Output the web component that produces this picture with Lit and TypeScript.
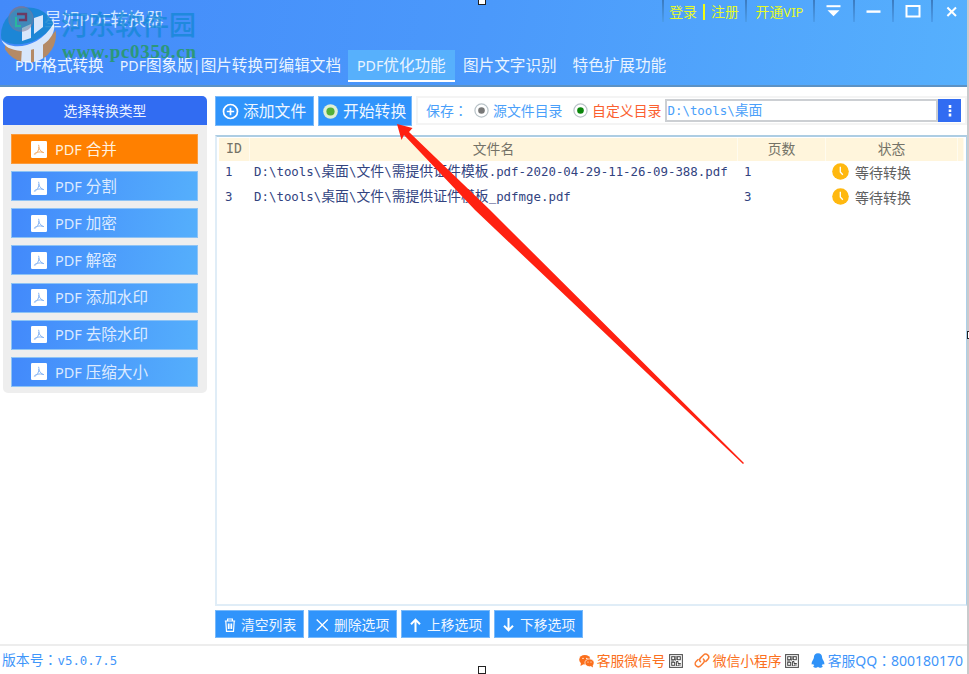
import { LitElement, html, svg, css } from "lit";
import { customElement, state } from "lit/decorators.js";
import { classMap } from "lit/directives/class-map.js";

/** Splits a label into Latin, colon and Chinese runs so each gets its own face and size. */
const runs = (text: string) =>
  (text.match(/[\x00-\x7f]+|：|[^\x00-\x7f：]+/g) ?? []).map((r) =>
    html`<span class=${r === "：" ? "colon" : r.charCodeAt(0) < 128 ? "la" : "zh"}>${r}</span>`);

const icon = (name: string, w: number, h: number, body: unknown) =>
  html`<svg class="icon ${name}" width=${w} height=${h} viewBox="0 0 ${w} ${h}">${body}</svg>`;

const pdfIcon = () => icon("pdf", 16, 17, svg`
  <rect width="16" height="17" rx="1.2" fill="#fff"/>
  <path class="glyph" d="M7.6 3.8C8.2 6 8 7.5 7.4 9C6.5 11.2 5 13.2 3.3 13.2C4.2 11.3 8.3 10.2 12.8 11.6C10.8 11.2 8.5 9.2 7.6 6" fill="none" stroke-width="1"/>`);

const plusIcon = () => icon("plus", 17, 17, svg`
  <g fill="none" stroke="#fff" stroke-width="1.7"><circle cx="8.5" cy="8.5" r="7"/><path d="M4.8 8.5H12.2M8.5 4.8V12.2"/></g>`);
const startIcon = () => icon("start", 15, 15, svg`
  <circle cx="7.5" cy="7.5" r="7.3" fill="#e0efd4"/><circle cx="7.5" cy="7.5" r="4.1" fill="#54b03a"/>`);
const clockIcon = () => icon("clock", 17, 17, svg`
  <circle cx="8.5" cy="8.5" r="8.3" fill="#ffb80f"/><path d="M8.3 3.8V9L10.8 11.8" fill="none" stroke="#fff" stroke-width="1.3"/>`);
const radioIcon = (dot: string) => icon("radio", 15, 15, svg`
  <circle cx="7.5" cy="7.5" r="6.6" fill="#fff" stroke="#b9c3c8" stroke-width="1.2"/><circle cx="7.5" cy="7.5" r="3.3" fill=${dot}/>`);
const qrIcon = () => icon("qr", 14, 14, svg`
  <rect x=".6" y=".6" width="12.8" height="12.8" fill="#fff" stroke="#555" stroke-width="1.1"/>
  <g fill="none" stroke="#444" stroke-width="1"><rect x="2.7" y="2.7" width="3" height="3"/><rect x="8.3" y="2.7" width="3" height="3"/>
  <rect x="2.7" y="8.3" width="3" height="3"/><path d="M7 2V6H5.8M7.4 12V7.5H9V9.5H11.8M9 12V11H11.8M2.2 7H5"/></g>`);

const trash = svg`<g fill="none" stroke="#fff" stroke-width="1.2"><path d="M.8 3H11.2M3.6 3V1H8.4V3M1.8 3.3L2.5 13.3H9.5L10.2 3.3M4.4 5.5V11M6 5.5V11M7.6 5.5V11"/></g>`;
const cross = svg`<path d="M.7 1.5L11.8 12.5M11.8 1.5L.7 12.5" stroke="#fff" stroke-width="1.3"/>`;
const up = svg`<path d="M5.5 14V2M1 6.2L5.5 1.6L10 6.2" fill="none" stroke="#fff" stroke-width="2"/>`;
const down = svg`<path d="M5.5 0V12M1 7.8L5.5 12.4L10 7.8" fill="none" stroke="#fff" stroke-width="2"/>`;

@customElement("app-root")
class AppRoot extends LitElement {
  @state() private tab = 2;
  @state() private kind = 0;

  private tabs = ["PDF格式转换", "PDF图象版|图片转换可编辑文档", "PDF优化功能", "图片文字识别", "特色扩展功能"];
  private kinds = ["合并", "分割", "加密", "解密", "添加水印", "去除水印", "压缩大小"];
  private files = [
    { id: 1, name: "D:\\tools\\桌面\\文件\\需提供证件模板.pdf-2020-04-29-11-26-09-388.pdf", pages: 1 },
    { id: 3, name: "D:\\tools\\桌面\\文件\\需提供证件模板_pdfmge.pdf", pages: 3 },
  ];
  private actions = [
    { label: "清空列表", art: trash, w: 12 },
    { label: "删除选项", art: cross, w: 13 },
    { label: "上移选项", art: up, w: 11 },
    { label: "下移选项", art: down, w: 11 },
  ];

  static styles = css`
    :host { display: block; position: relative; width: 969px; height: 674px; overflow: hidden; background: #fff;
      font-family: "Noto Sans", "Noto Sans CJK SC", sans-serif; font-size: 15.6px; line-height: 1; }
    * { box-sizing: border-box; }
    svg { display: block; flex: none; }
    .la { font-size: .93em; white-space: pre; }
    .zh { font-family: "Noto Sans CJK SC", sans-serif; }
    .colon { font-family: "Noto Sans CJK TC", sans-serif; }
    .mono .la { font-family: "DejaVu Sans Mono", monospace; font-size: 12.42px; }
    .mono { font-size: 13.86px; white-space: nowrap; }
    .window { display: flex; flex-direction: column; width: 967px; height: 674px; }
    .edge { position: absolute; right: 0; top: 0; width: 2px; height: 674px; background: #c9cacc; }

    .header { height: 87px; flex: none; color: #eaf4ff; background: linear-gradient(100deg, #438afa, #4b99fb 50%, #56b0fd);
      border-bottom: 2px solid #5c92c4; display: flex; flex-direction: column; }
    .titlebar { height: 50px; display: flex; align-items: flex-start; }
    .logo { margin: 6px 0 0 8px; }
    .title { margin: 10px auto 0 9px; font-size: 17.8px; color: #d5e9ff; white-space: nowrap; }
    .tool { height: 22px; display: flex; align-items: center; justify-content: center; border-left: 2px solid #3d84d0; color: #e6fa28;
      border-image: linear-gradient(#3a79bd, #4d9fee) 1; font-size: 13.9px; padding-top: 2px; white-space: nowrap; }
    .account { width: 83px; gap: 6px; padding-right: 1px; }
    .account i { width: 2px; height: 16px; background: #f2fc10; }
    .vip { width: 68px; padding-right: 1px; } .vip .la { font-size: 13px; }
    .drop { width: 40px; padding-right: 2px; } .min { width: 39px; } .max { width: 39px; } .close { width: 36px; padding-left: 4px; }

    .tabs { display: flex; padding-left: 6px; height: 32px; white-space: nowrap; }
    .tab { display: flex; align-items: center; padding: 0 8px 0 9px; height: 32px; border-bottom: 2px solid transparent; }
    .tab + .tab { margin-left: -1px; }
    .tab .la { font-size: 14.2px; }
    .tab.on { background: #57b0fc; border-color: #fff; width: 107px; }

    .body { display: flex; flex: 1; }
    .side { width: 204px; height: 297px; margin: 9px 0 0 3px; border-radius: 5px; background: #eee; overflow: hidden; }
    .side-title { height: 29px; background: #316cf2; color: #eaf1ff; font-size: 13.8px; display: flex; align-items: center; justify-content: center; }
    .kinds { display: flex; flex-direction: column; gap: 7.17px; padding: 9px 9px 0 8px; }
    .kind { height: 30px; display: flex; align-items: center; gap: 8px; padding-left: 19px; color: #dceaff; border: 1px solid #8dc3f5;
      background: linear-gradient(100deg, #4289fb, #55affc); white-space: pre; }
    .kind.on { background: #ff8000; border-color: #fb9b3c; color: #fff0dd; }
    .glyph { stroke: #86b5f5; } .kind.on .glyph { stroke: #f5ad68; }

    .main { width: 752px; margin: 9px 0 0 8px; display: flex; flex-direction: column; }
    .toolbar { display: flex; gap: 4px; height: 30px; }
    .btn { display: flex; align-items: center; background: #3094fb; border: 1px solid #78b9fa; color: #eef6ff; white-space: nowrap; }
    .toolbar .btn { gap: 4px; padding-left: 6px; font-size: 15.8px; width: 99px; }
    .toolbar .go { width: 94px; padding-left: 4px; gap: 5px; }
    .save { flex: 1; height: 29px; border: 2px solid #f4f4f4; display: flex; align-items: center; color: #4a9ffa; font-size: 13.9px; padding-left: 8px; white-space: nowrap; }
    .save .radio { margin-right: 4px; }
    .cap { width: 48px; } .own { color: #fb6030; margin-right: 4px; } .src { width: 80px; }
    .path { width: 273px; height: 23px; border: 2px solid #cccfd3; display: flex; align-items: center; }
    .more { width: 23px; height: 23px; background: #316cf2; display: flex; align-items: center; justify-content: center; }

    .table { margin-top: 9px; height: 471px; border: 2px solid #e0edf7; border-top-color: #adcde3; padding: 1px 2px; width: 752px; border-right-width: 1px; border-right-color: #acd0ea; }
    .row { display: grid; grid-template-columns: 31px 488px 88px 132px 6px; height: 25px; align-items: center; color: #32437f; padding-bottom: 2px; }
    .head { height: 22px; color: #747267; font-size: 13.8px; padding: 0; }
    .head > div { height: 23px; background: #fff5dc; border-right: 1px solid #fffbee; display: flex; align-items: center; justify-content: center; padding-bottom: 2px; }
    .row.head .la { font-size: 13.2px; }
    .id { padding-left: 6px; } .name { padding-left: 4px; } .pages { padding-left: 6px; }
    .status { display: flex; align-items: center; gap: 6px; padding-left: 6px; color: #606060; font-size: 14px; }

    .actions { display: flex; gap: 4px; margin-top: 4px; }
    .actions .btn { width: 89px; height: 28px; font-size: 13.8px; gap: 5px; padding: 1px 0 0 7px; }
    .actions .slot { width: 13px; display: flex; justify-content: center; }
    .footer { height: 30px; border-top: 2px solid #ededed; display: flex; align-items: center; color: #3f96fa; padding: 1px 4px 0 2px; font-size: 13.8px; white-space: nowrap; }
    .version { margin-right: auto; }
    .link { display: flex; align-items: center; color: #fb7020; gap: 3px; }
    .wx { margin-right: 11px; } .mini { margin-right: 12px; } .qq { color: #3f96fa; }
    .qq .la { font-size: 14px; }

    .overlay { position: absolute; left: 0; top: 0; pointer-events: none; }
  `;

  private header() {
    return html`<div class="header">
      <div class="titlebar">
        <svg class="logo" width="27" height="27" viewBox="0 0 27 27"><circle cx="13.5" cy="13" r="11.8" fill="#3279ae" stroke="#6674a1" stroke-width="2"/>
          <path d="M9 8H18V14H10V20" fill="none" stroke="#6b3b63" stroke-width="2.6"/><path d="M8 12V21H13" fill="none" stroke="#29b79d" stroke-width="2"/></svg>
        <div class="title">${runs("星如PDF转换器")}</div>
        <div class="tool account"><span class="zh">登录</span><i></i><span class="zh">注册</span></div>
        <div class="tool vip"><span>${runs("开通VIP")}</span></div>
        <div class="tool drop"><svg width="15" height="16" viewBox="0 0 15 16"><path d="M.5 2.2H14.5" stroke="#fff" stroke-width="2"/><path d="M1.5 6.3H13.5L7.5 12.3Z" fill="#fff"/></svg></div>
        <div class="tool min"><svg width="15" height="16"><path d="M.5 7.6H14.5" stroke="#fff" stroke-width="2.4"/></svg></div>
        <div class="tool max"><svg width="16" height="16"><rect x="1.5" y="2" width="13" height="10.5" fill="none" stroke="#fff" stroke-width="2"/></svg></div>
        <div class="tool close"><svg width="12" height="16"><path d="M1.4 3.5L10 12M10 3.5L1.4 12" stroke="#fff" stroke-width="2"/></svg></div>
      </div>
      <div class="tabs">${this.tabs.map((t, i) => html`
        <div class=${classMap({ tab: true, on: i === this.tab })} @click=${() => (this.tab = i)}><span>${runs(t)}</span></div>`)}</div>
    </div>`;
  }

  private sidebar() {
    return html`<div class="side">
      <div class="side-title">${runs("选择转换类型")}</div>
      <div class="kinds">${this.kinds.map((k, i) => html`
        <div class=${classMap({ kind: true, on: i === this.kind })} @click=${() => (this.kind = i)}>${pdfIcon()}<span>${runs("PDF " + k)}</span></div>`)}</div>
    </div>`;
  }

  private panel() {
    return html`<div class="main">
      <div class="toolbar">
        <div class="btn">${plusIcon()}${runs("添加文件")}</div>
        <div class="btn go">${startIcon()}${runs("开始转换")}</div>
        <div class="save">
          <span class="cap">${runs("保存：")}</span>
          ${radioIcon("#777")}<span class="zh src">源文件目录</span>
          ${radioIcon("#0b860b")}<span class="zh own">自定义目录</span>
          <div class="path"><span class="mono">${runs("D:\\tools\\桌面")}</span></div>
          <div class="more"><svg width="4" height="13"><path d="M2 1V4M2 5.5V8M2 9.5V12.5" stroke="#fff" stroke-width="2.6"/></svg></div>
        </div>
      </div>
      <div class="table">
        <div class="row head"><div class="mono"><span class="la">ID</span></div><div class="zh">文件名</div><div class="zh">页数</div><div class="zh">状态</div><div></div></div>
        ${this.files.map((f) => html`<div class="row">
          <div class="id mono">${runs(String(f.id))}</div><div class="name mono">${runs(f.name)}</div>
          <div class="pages mono">${runs(String(f.pages))}</div><div class="status">${clockIcon()}<span class="zh">等待转换</span></div></div>`)}
      </div>
      <div class="actions">${this.actions.map((a) => html`
        <div class="btn"><div class="slot">${icon("act", a.w, 14, a.art)}</div><span class="zh">${a.label}</span></div>`)}</div>
    </div>`;
  }

  private footer() {
    return html`<div class="footer">
      <span class="version mono">${runs("版本号：v5.0.7.5")}</span>
      <div class="link wx">${icon("wechat", 15, 14, svg`<g fill="#fb6f1c"><ellipse cx="5.8" cy="5.7" rx="5.6" ry="4.8"/><path d="M2 8L1.5 12L5 10Z"/></g><ellipse cx="10.5" cy="8.8" rx="4.6" ry="3.9" fill="#fb6f1c" stroke="#fff" stroke-width=".7"/><path d="M11 11.5L14 13.5L13.5 10Z" fill="#fb6f1c"/><g fill="#fff"><circle cx="4" cy="4.4" r=".7"/><circle cx="7.8" cy="4.4" r=".7"/><circle cx="9" cy="8" r=".6"/><circle cx="12" cy="8" r=".6"/></g>`)}
        <span class="zh">客服微信号</span>${qrIcon()}</div>
      <div class="link mini">${icon("chain", 16, 15, svg`<g fill="none" stroke="#fb7c32" stroke-width="1.5" stroke-linecap="round"><path d="M6.5 8.8C5.2 7.4 5.5 6 6.6 4.9L9.3 2.2C10.6 .9 12.6 .9 13.8 2.1C15 3.3 15 5.2 13.8 6.4L11.8 8.4"/><path d="M9.4 6.1C10.7 7.5 10.4 8.9 9.3 10L6.6 12.7C5.3 14 3.3 14 2.1 12.8C.9 11.6 .9 9.7 2.1 8.5L4.1 6.5"/></g>`)}
        <span class="zh">微信小程序</span>${qrIcon()}</div>
      <div class="link qq">${icon("penguin", 14, 15, svg`<path d="M7 .3C4.2 .3 2.9 2.2 2.9 4.6C2.9 6.5 .3 8.6 .6 11C.8 12.2 1.8 11.3 2.2 10.7C2.4 11.7 2.9 12.2 3.4 12.6C1.6 13.3 2.2 14.7 4.2 14.7C5.6 14.7 6.4 14.3 7 13.7C7.6 14.3 8.4 14.7 9.8 14.7C11.8 14.7 12.4 13.3 10.6 12.6C11.1 12.2 11.6 11.7 11.8 10.7C12.2 11.3 13.2 12.2 13.4 11C13.7 8.6 11.1 6.5 11.1 4.6C11.1 2.2 9.8 .3 7 .3Z" fill="#2f92f8"/>`)}
        <span>${runs("客服QQ：800180170")}</span></div>
    </div>`;
  }

  /** Site watermark, pointer arrow and canvas handles that float above the window. */
  private overlay() {
    return html`<svg class="overlay" width="969" height="674" viewBox="0 0 969 674">
      <clipPath id="disc"><circle cx="28.500" cy="35" r="27.500"/></clipPath>
      <g clip-path="url(#disc)" opacity=".85">
        <path d="M0 5H58V25C47 31 39 42 22 44C11 45 4 42 0 38Z" fill="#1685cf"/>
        <path d="M5 45C22 54 45 46 57 29V64H5Z" fill="#c88a4c"/>
        <path d="M22 28L31 24V38L22 41ZM22 47L31 46V64H21ZM34 18L43 15V27L34 34ZM34 45L43 40V62L34 64Z" fill="#f1f6fb"/>
        <path d="M1 39C9 51 38 50 54 23C57 39 38 52 21 51C11 50 4 47 1 39Z" fill="#f1f6fb"/>
      </g>
      <circle cx="21" cy="19" r="12" fill="#5f8fae" stroke="#7d7ba4" stroke-width="1.500" opacity=".55"/>
      <g fill="none"><path d="M17 14H26V20H19" stroke="#6b3b63" stroke-width="2.300"/><path d="M16 17V26H21" stroke="#29b79d" stroke-width="2"/></g>
      <text x="61" y="35" font-family="Noto Sans CJK SC" font-weight="500" font-size="27" fill="#1688d6" opacity=".8" textLength="135">河东软件园</text>
      <text x="62" y="58" font-family="Liberation Serif" font-weight="700" font-size="19" fill="#279a63" opacity=".85" textLength="134">www.pc0359.cn</text>
      <path d="M397 124L412.500 128L409 132L489 209L744 463L743 464L475 210L404 135L401.500 140Z" fill="#ff2111"/>
      <g fill="#fff" stroke="#222"><rect x="478.500" y="-3.500" width="7" height="8"/><rect x="478.500" y="666.500" width="7" height="7"/><rect x="967.500" y="331.500" width="7" height="7"/></g>
    </svg>`;
  }

  render() {
    return html`<div class="window">${this.header()}<div class="body">${this.sidebar()}${this.panel()}</div>${this.footer()}</div>
      <div class="edge"></div>${this.overlay()}`;
  }
}
